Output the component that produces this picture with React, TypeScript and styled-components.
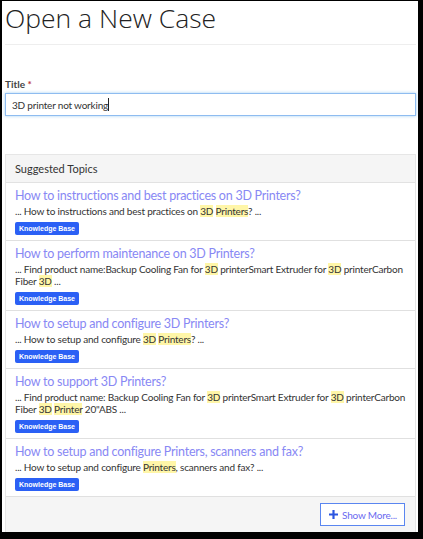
import React from "react";
import styled, { createGlobalStyle } from "styled-components";

const Global = createGlobalStyle`
  html, body { margin: 0; padding: 0; background: #000; }
  body { padding: 1px 5px 7px 2px; font-family: Lato, "Open Sans", Arial, sans-serif; color: #333; }
  * { box-sizing: border-box; }
`;

const Frame = styled.div`
  background: #fff;
  height: 531px;
  padding: 0 2px 0 3px;
  overflow: hidden;
`;

const Heading = styled.h1`
  margin: 0;
  padding: 2px 0 11px 0;
  font-family: "Open Sans", Lato, sans-serif;
  font-weight: 300;
  font-size: 26.5px;
  line-height: 30px;
  color: #222;
  border-bottom: 1px solid #eee;
`;

const Field = styled.div`
  margin-top: 33px;
  display: flex;
  flex-direction: column;
  gap: 3px;
`;

const Label = styled.label`
  font-size: 10px;
  font-weight: 700;
  color: #444;
  line-height: 12px;
`;

const Req = styled.span`
  color: #b33;
`;

const Input = styled.div`
  height: 23px;
  border: 1px solid #8ebcf0;
  box-shadow: 0 0 3px rgba(102, 175, 233, 0.6);
  padding: 0 6px;
  font-size: 10px;
  letter-spacing: -0.2px;
  color: #333;
  display: flex;
  align-items: center;
`;

const Caret = styled.span`
  display: inline-block;
  width: 1px;
  height: 13px;
  background: #222;
`;

const Panel = styled.div`
  margin-top: 38px;
  border: 1px solid #e6e6e6;
  border-bottom: none;
`;

const PanelHeader = styled.div`
  background: #f5f5f5;
  height: 28px;
  padding: 0 9px;
  font-size: 11px;
  line-height: 27px;
  color: #333;
  border-bottom: 1px solid #e2e2e2;
`;

const Item = styled.div`
  padding: 4px 6px 5px 9px;
  border-bottom: 1px solid #e0e0e0;
`;

const ItemTitle = styled.a`
  display: block;
  font-size: 12.5px;
  letter-spacing: -0.25px;
  line-height: 18px;
  color: #8888f4;
  text-decoration: none;
`;

const Snippet = styled.div`
  font-size: 10px;
  letter-spacing: -0.2px;
  line-height: 12px;
  color: #333;
`;

const Mark = styled.span`
  background: #fff6a8;
`;

const Badge = styled.div`
  width: fit-content;
  margin-top: 5px;
  height: 13px;
  background: #2b60f5;
  color: #fff;
  font-family: Arial, "Liberation Sans", sans-serif;
  font-weight: 700;
  font-size: 7px;
  line-height: 13px;
  padding: 0 4px;
  border-radius: 2px;
`;

const Footer = styled.div`
  background: #f5f5f5;
  height: 35px;
  display: flex;
  align-items: center;
  justify-content: flex-end;
  padding-right: 10px;
`;

const MoreButton = styled.button`
  height: 23px;
  border: 1px solid #5a86f0;
  background: #fff;
  color: #6a6af0;
  font-family: Lato, "Open Sans", Arial, sans-serif;
  font-size: 10px;
  letter-spacing: -0.2px;
  padding: 0 7px 0 8px;
  display: flex;
  align-items: center;
  gap: 4px;
`;

type Part = string | { m: string };

const items: { title: string; snippet: Part[] }[] = [
  {
    title: "How to instructions and best practices on 3D Printers?",
    snippet: ["... How to instructions and best practices on ", { m: "3D" }, " ", { m: "Printers" }, "? ..."],
  },
  {
    title: "How to perform maintenance on 3D Printers?",
    snippet: [
      "... Find product name:Backup Cooling Fan for ",
      { m: "3D" },
      " printerSmart Extruder for ",
      { m: "3D" },
      " printerCarbon Fiber ",
      { m: "3D" },
      " ...",
    ],
  },
  {
    title: "How to setup and configure 3D Printers?",
    snippet: ["... How to setup and configure ", { m: "3D" }, " ", { m: "Printers" }, "? ..."],
  },
  {
    title: "How to support 3D Printers?",
    snippet: [
      "... Find product name: Backup Cooling Fan for ",
      { m: "3D" },
      " printerSmart Extruder for ",
      { m: "3D" },
      " printerCarbon Fiber ",
      { m: "3D" },
      " ",
      { m: "Printer" },
      " 20\"ABS ...",
    ],
  },
  {
    title: "How to setup and configure Printers, scanners and fax?",
    snippet: ["... How to setup and configure ", { m: "Printers" }, ", scanners and fax? ..."],
  },
];

export default function App() {
  return (
    <>
      <Global />
      <Frame>
        <Heading>Open a New Case</Heading>
        <Field>
          <Label>
            Title <Req>*</Req>
          </Label>
          <Input>
            3D printer not working
            <Caret />
          </Input>
        </Field>
        <Panel>
          <PanelHeader>Suggested Topics</PanelHeader>
          {items.map((it, i) => (
            <Item key={i}>
              <ItemTitle href="#">{it.title}</ItemTitle>
              <Snippet>
                {it.snippet.map((p, j) =>
                  typeof p === "string" ? <React.Fragment key={j}>{p}</React.Fragment> : <Mark key={j}>{p.m}</Mark>
                )}
              </Snippet>
              <Badge>Knowledge Base</Badge>
            </Item>
          ))}
          <Footer>
            <MoreButton>
              <svg width="9" height="9" viewBox="0 0 10 10">
                <path d="M5 0v10M0 5h10" stroke="#2b55e0" strokeWidth="2.4" />
              </svg>
              Show More...
            </MoreButton>
          </Footer>
        </Panel>
      </Frame>
    </>
  );
}
